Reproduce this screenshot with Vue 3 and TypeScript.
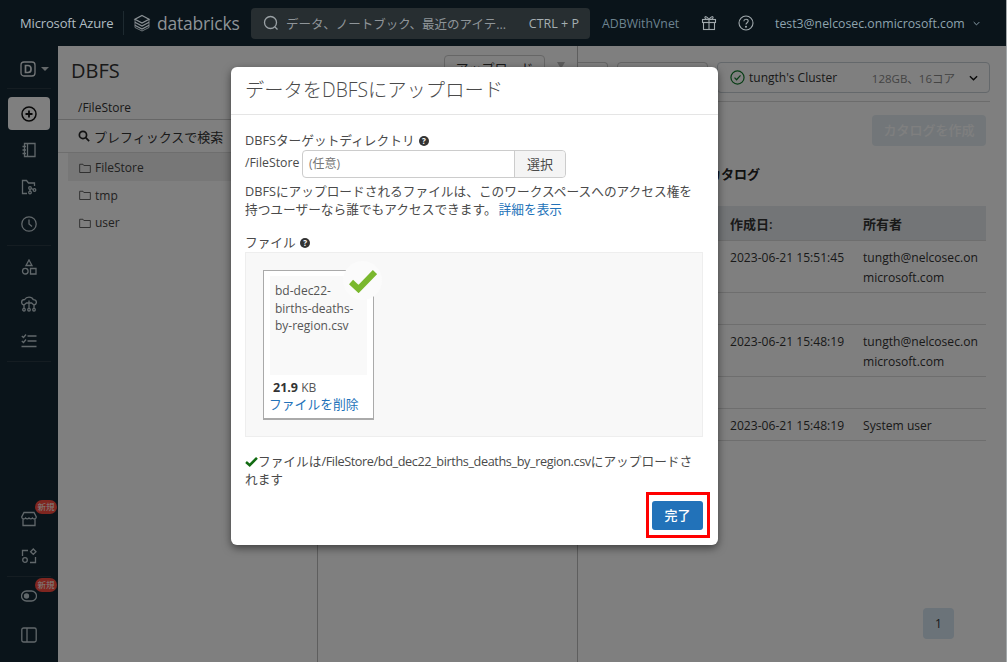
<script setup lang="ts">
interface Row { date: string; owner: string[]; spacer: boolean }
const rows: Row[] = [
  { date: '2023-06-21 15:51:45', owner: ['tungth@nelcosec.on', 'microsoft.com'], spacer: true },
  { date: '2023-06-21 15:48:19', owner: ['tungth@nelcosec.on', 'microsoft.com'], spacer: true },
  { date: '2023-06-21 15:48:19', owner: ['System user'], spacer: false },
]
const folders = ['FileStore', 'tmp', 'user']
</script>

<template>
  <div class="page">
    <header class="top">
      <span class="azure">Microsoft Azure</span>
      <span class="topsep"></span>
      <svg class="stack" viewBox="0 0 18 18" width="18" height="18" fill="none" stroke="currentColor" stroke-width="1.3">
        <path d="M9 1.500 16 5.300 9 9 2 5.300Z" />
        <path d="M2 8.200 9 12l7-3.800" />
        <path d="M2 11.200 9 15l7-3.800" />
        <path d="M2 5.500v8L9 17l7-3.500v-8" stroke-width="0.8" />
      </svg>
      <span class="brand">databricks</span>
      <div class="search">
        <svg viewBox="0 0 16 16" width="16" height="16" fill="none" stroke="currentColor" stroke-width="1.3">
          <circle cx="7.500" cy="7.500" r="6" /><path d="m12 12 2.500 2.500" />
        </svg>
        <span class="stext">データ、ノートブック、最近のアイテ...</span>
        <span class="skey">CTRL + P</span>
      </div>
      <span class="ws">ADBWithVnet</span>
      <svg class="gift" viewBox="0 0 16 16" width="16" height="16" fill="none" stroke="currentColor" stroke-width="1.1">
        <rect x="1.500" y="4.500" width="13" height="3" /><rect x="2.500" y="7.500" width="11" height="7" />
        <path d="M8 4.500v10M8 4.500C6 1 3.500 1 4 3c.2.9 2 1.500 4 1.500Zm0 0c2-3.500 4.500-3.500 4-1.500-.2.9-2 1.500-4 1.500Z" />
      </svg>
      <svg class="help" viewBox="0 0 16 16" width="16" height="16" fill="none" stroke="currentColor" stroke-width="1.1">
        <circle cx="8" cy="8" r="7" /><path d="M5.800 6.200C5.900 4.900 6.800 4.200 8 4.200c1.300 0 2.200.8 2.200 1.900 0 1.800-2.200 1.600-2.200 3.500" /><circle cx="8" cy="11.700" r=".5" />
      </svg>
      <span class="user">test3@nelcosec.onmicrosoft.com</span>
      <svg class="ch" viewBox="0 0 10 6" width="7" height="5" fill="none" stroke="currentColor" stroke-width="1.4"><path d="m1 1 4 4 4-4" /></svg>
    </header>

    <div class="body">
      <nav class="side">
        <div class="wsicon">
          <svg viewBox="0 0 16 16" width="16" height="16" fill="none" stroke="#e8eef1" stroke-width="1.3">
            <path d="M4 1h8a3 3 0 0 1 3 3v8a3 3 0 0 1-3 3H4a3 3 0 0 1-3-3V4a3 3 0 0 1 3-3Z" />
            <path d="M5.500 4.500v7H8a3 3 0 0 0 3-3v-1a3 3 0 0 0-3-3Z" stroke-width="1.700" />
          </svg>
          <span class="caret"></span>
        </div>
        <span class="nsep first"></span>
        <div class="nitem active">
          <svg viewBox="0 0 16 16" width="16" height="16" fill="none" stroke="#111" stroke-width="1.500"><circle cx="8" cy="8" r="7" /><path d="M8 4.500v7M4.500 8h7" stroke-width="1.800" /></svg>
        </div>
        <div class="nitem">
          <svg viewBox="0 0 16 16" width="16" height="16"><path d="M3.500 1.500h10.500v13H3.500Zm3 0v13M1.500 4.500h3.500M1.500 8h3.500M1.500 11.500h3.500" /></svg>
        </div>
        <div class="nitem">
          <svg viewBox="0 0 16 16" width="16" height="16"><path d="M6 14.500H1.500v-13h4l2 2.500h6v3" /><circle cx="9" cy="9" r="1.300" /><circle cx="9" cy="13.500" r="1.300" /><circle cx="13.500" cy="11" r="1.300" /><path d="M9 10.300v2M10.300 9.500l2 1" /></svg>
        </div>
        <div class="nitem">
          <svg viewBox="0 0 16 16" width="16" height="16"><circle cx="8" cy="8" r="7.200" /><path d="M8 3.500V8l3 2.500" /></svg>
        </div>
        <span class="nsep second"></span>
        <div class="nitem">
          <svg viewBox="0 0 16 16" width="16" height="16"><path d="M8 1 11 6.500H5ZM9.500 9.500h5.500v5.500H9.500Z" /><circle cx="4.300" cy="12.200" r="2.800" /></svg>
        </div>
        <div class="nitem">
          <svg viewBox="0 0 16 16" width="16" height="16"><path d="M3 9c-1.500-.3-2.400-1.500-2.400-2.800C.6 4.600 2 3.500 3.700 3.500 4.500 2 6.200 1.200 8 1.200c2.200 0 3.700 1.200 4.300 2.500 1.800.1 3.100 1.300 3.100 2.600 0 1.400-1 2.400-2.400 2.700M8 4.500v7.500M3 12.300V9M13 12.300V9M3 9l2.500-2h5L13 9" /><circle cx="3" cy="13.700" r="1.300" /><circle cx="8" cy="13.700" r="1.300" /><circle cx="13" cy="13.700" r="1.300" /></svg>
        </div>
        <div class="nitem">
          <svg viewBox="0 0 16 16" width="16" height="16"><path d="M6.500 3h9M6.500 8h9M.5 13.500h15M.8 3l1.700 1.500L5 1.500M.8 8l1.700 1.500L5 6.500" /></svg>
        </div>
        <span class="nsep third"></span>
        <div class="spacer"></div>
        <div class="nitem">
          <span class="badge">新規</span>
          <svg viewBox="0 0 16 16" width="16" height="16"><path d="M2 8v6.500h12V8M3 1.500h10L15.300 6c0 2-2.800 2.500-3.800 1-1 1-2.500 1-3.500 0-1 1-2.500 1-3.500 0-1 1.500-3.800 1-3.800-1Z" /></svg>
        </div>
        <div class="nitem">
          <svg viewBox="0 0 16 16" width="16" height="16"><path d="M7 2.500H1.500V8M9 14.500h5.500V9" /><path d="M12.300 1 15 3.700l-2.700 2.700-2.700-2.700Z" /><circle cx="4" cy="12" r="2.300" /></svg>
        </div>
        <span class="nsep fourth"></span>
        <div class="nitem">
          <span class="badge b2">新規</span>
          <svg viewBox="0 0 16 16" width="16" height="16"><rect x=".5" y="3" width="15" height="10" rx="5" /><circle cx="5.500" cy="8" r="2" fill="currentColor" /></svg>
        </div>
        <div class="nitem last">
          <svg viewBox="0 0 16 16" width="16" height="16"><rect x=".8" y="1" width="14.400" height="14" rx="1.800" /><path d="M6 1v14" /></svg>
        </div>
      </nav>

      <main class="content">
        <section class="dbfs">
          <div class="dhead">
            <h1>DBFS</h1>
            <span class="upbtn">アップロード</span>
            <span class="upx"></span>
          </div>
          <div class="crumb">/FileStore</div>
          <div class="cols">
            <div class="col1">
              <div class="prefix">
                <svg viewBox="0 0 14 14" width="12" height="12" fill="none" stroke="#222" stroke-width="2"><circle cx="5.800" cy="5.800" r="4.200" /><path d="m9 9 4 4" /></svg>
                <span>プレフィックスで検索</span>
              </div>
              <div v-for="(f, i) in folders" :key="f" class="folder" :class="{ sel: i === 0 }">
                <svg viewBox="0 0 14 12" width="12" height="10" fill="none" stroke="#555" stroke-width="1.100"><path d="M.6 1.500h4l1 1.500h7.800v8.400H.6Z" /></svg>
                <span>{{ f }}</span>
              </div>
            </div>
            <div class="col2"></div>
          </div>
        </section>

        <section class="catalog">
          <div class="ctop">
            <span class="chip c1"></span>
            <span class="chip c2"></span>
            <div class="cluster">
              <svg viewBox="0 0 16 16" width="15" height="15" fill="none" stroke="#0f7a2a" stroke-width="1.300"><circle cx="8" cy="8" r="7" /><path d="m4.800 8.200 2.200 2.200 4.200-4.600" /></svg>
              <span class="cname">tungth's Cluster</span>
              <span class="cinfo">128GB、16コア</span>
              <svg class="cch" viewBox="0 0 10 6" width="9" height="6" fill="none" stroke="#111" stroke-width="1.500"><path d="m1 1 4 4 4-4" /></svg>
            </div>
          </div>
          <div class="cbody">
            <div class="createrow"><span class="create">カタログを作成</span></div>
            <h2>カタログ</h2>
            <div class="table">
              <div class="thead"><span class="d">作成日:</span><span class="o">所有者</span></div>
              <template v-for="(r, i) in rows" :key="i">
                <div class="trow"><span class="d">{{ r.date }}</span><span class="o"><span v-for="l in r.owner" :key="l" class="ol">{{ l }}</span></span></div>
                <div v-if="r.spacer" class="tgap"></div>
              </template>
            </div>
            <div class="pager"><span class="pg">1</span></div>
          </div>
        </section>
      </main>

      <div class="overlay">
        <div class="modal">
          <div class="mhead">データをDBFSにアップロード</div>
          <div class="mbody">
            <div class="label">DBFSターゲットディレクトリ <span class="q">?</span></div>
            <div class="pathrow">
              <span class="prefixp">/FileStore</span>
              <div class="igroup"><span class="ph">(任意)</span><span class="sel-btn">選択</span></div>
            </div>
            <p class="note">DBFSにアップロードされるファイルは、このワークスペースへのアクセス権を持つユーザーなら誰でもアクセスできます。<a>詳細を表示</a></p>
            <div class="label l2">ファイル <span class="q">?</span></div>
            <div class="drop">
              <div class="file">
                <div class="fname">bd-dec22-births-deaths-by-region.csv</div>
                <div class="fsize"><b>21.9</b> KB</div>
                <a class="fdel">ファイルを削除</a>
                <span class="okmark">
                  <svg viewBox="0 0 28 24" width="28" height="24" fill="none" stroke="#7ab82e" stroke-width="6"><path d="m2 13 7.500 7L26 3" /></svg>
                </span>
              </div>
            </div>
            <p class="result">
              <svg viewBox="0 0 14 11" width="13" height="10" fill="none" stroke="#126b12" stroke-width="2.800"><path d="m1 5.500 4 3.500 8-8" /></svg>ファイルは<span class="rpath">/FileStore/bd_dec22_births_deaths_by_region.csv</span>にアップロードされます
            </p>
          </div>
          <div class="mfoot"><span class="highlight"><span class="done">完了</span></span></div>
        </div>
      </div>
    </div>
  </div>
</template>

<style>
html, body { margin: 0; padding: 0; background: #808080; }
</style>

<style scoped>
.page {
  width: 1007px; height: 662px; overflow: hidden; display: flex; flex-direction: column; box-sizing: border-box;
  border-right: 1px solid #a3a8aa;
  font-family: "Open Sans", "Noto Sans CJK JP", sans-serif; font-size: 13px; color: #333;
}
.top {
  height: 46px; flex: none; background: #0a141a; display: flex; align-items: center;
  color: #a7b0b5; box-sizing: border-box; padding-left: 20px; white-space: nowrap;
}
.azure { font-size: 13px; width: 103px; flex: none; letter-spacing: -.15px; color: #b0bcc2; }
.topsep { width: 1px; height: 24px; background: #1e2a30; margin-right: 9px; }
.stack { color: #8a9094; flex: none; }
.brand { font-size: 17.500px; font-weight: 500; color: #8e9397; margin-left: 6px; width: 84px; flex: none; letter-spacing: -.2px; }
.search {
  width: 339px; height: 31px; margin-left: 10px; flex: none; background: #272e31; border-radius: 4px;
  display: flex; align-items: center; box-sizing: border-box; padding: 0 11px 0 12px; color: #9aa1a5;
}
.stext { margin-left: 7px; font-size: 12.500px; flex: 1; color: #8f9599; overflow: hidden; }
.skey { font-size: 12.500px; color: #a5aeb2; }
.ws { margin-left: 12px; font-size: 12.300px; color: #6d8390; width: 76px; flex: none; }
.gift { margin-left: 23px; color: #a0a8ac; flex: none; }
.help { margin-left: 21px; color: #a0a8ac; flex: none; }
.user { margin-left: 21px; font-size: 12.300px; color: #8ea3ae; }
.ch { margin-left: 8px; color: #8ea3ae; flex: none; }

.body { flex: 1; display: flex; position: relative; min-height: 0; }
.side { width: 58px; flex: none; background: #142834; display: flex; flex-direction: column; align-items: center; position: relative; }
.nitem:not(.active) svg { fill: none; stroke: currentColor; stroke-width: 1.300; }
.wsicon { height: 42px; flex: none; width: 100%; display: flex; align-items: center; justify-content: center; gap: 5px; box-sizing: border-box; padding: 4px 0 0 11px; }
.caret { border: 4px solid transparent; border-top-color: #c9d0d4; border-bottom: 0; }
.nsep { height: 1px; width: 44px; background: #2a3a44; flex: none; }
.first { margin-bottom: 8px; }
.second { margin: 3px 0 2px; }
.third { margin-top: 2px; }
.fourth { margin: 2px 0 0; }
.nitem {
  width: 42px; height: 37px; flex: none; display: flex; align-items: center; justify-content: center;
  color: #c3d0d6; position: relative;
}
.active { height: 33px; margin-bottom: 1px; background: #fff; border-radius: 4px; }
.spacer { flex: 1; }
.last { margin-top: 2px; margin-bottom: 9px; }
.badge {
  position: absolute; left: 27px; top: 0; width: 22px; height: 14px; border-radius: 7px;
  background: #ff4c40; color: #fff; font-size: 8.500px; line-height: 14px; text-align: center;
}
.b2 { top: 1px; }

.content { flex: 1; display: flex; background: #fff; min-width: 0; }
.dbfs { width: 520px; flex: none; display: flex; flex-direction: column; border-right: 1px solid #bcbcbc; box-sizing: border-box; }
.dhead { height: 46px; flex: none; display: flex; align-items: flex-start; padding: 9px 0 0 13px; box-sizing: border-box; }
.dhead h1 { margin: 2px 0 0; font-size: 20px; line-height: 28px; font-weight: 400; color: #333; flex: none; width: 373px; }
.upbtn { border: 1px solid #ccc; border-radius: 4px; width: 101px; height: 26px; box-sizing: border-box; font-size: 13px; text-align: center; line-height: 24px; white-space: nowrap; overflow: hidden; flex: none; }
.upx { width: 0; height: 0; border: 4px solid transparent; border-top: 7px solid #bbb; border-bottom: 0; margin: 7px 0 0 12px; }
.crumb { height: 28px; flex: none; box-sizing: border-box; padding: 8px 0 0 20px; line-height: 16px; font-size: 12px; border-bottom: 1px solid #ccc; }
.cols { flex: 1; display: flex; }
.col1 { width: 260px; flex: none; padding-left: 10px; box-sizing: border-box; border-right: 1px solid #bcbcbc; }
.col2 { flex: 1; }
.prefix { height: 33px; display: flex; align-items: center; gap: 4px; font-size: 13px; color: #333; border-bottom: 1px solid #ddd; box-sizing: border-box; margin-left: -10px; padding-left: 20px; }
.folder { height: 27.500px; display: flex; align-items: center; gap: 4px; padding: 2px 0 0 11px; box-sizing: border-box; font-size: 12px; color: #444; }
.sel { background: #eee; }

.catalog { flex: 1; min-width: 0; display: flex; flex-direction: column; }
.ctop { height: 47px; flex: none; display: flex; align-items: flex-end; justify-content: flex-end; padding: 0 16px 0 0; box-sizing: border-box; gap: 9px; }
.chip { border: 1px solid #ccc; border-radius: 4px; height: 31px; box-sizing: border-box; flex: none; }
.c1 { width: 30px; margin-right: auto; border-left: 0; border-radius: 0 4px 4px 0; }
.c2 { width: 91px; }
.cluster {
  width: 273px; height: 31px; flex: none; border: 1px solid #c8d0d6; border-radius: 4px; box-sizing: border-box;
  display: flex; align-items: center; padding: 0 11px 0 12px; font-size: 12px; color: #333; white-space: nowrap;
}
.cluster svg { flex: none; }
.cname { margin-left: 4px; flex: 1; }
.cinfo { color: #888; margin-right: 14px; font-size: 11.500px; }
.cbody { flex: 1; margin: 8px 16px 0 0; padding: 0 4px 0 0; border-top: 1px solid #d8d8d8; display: flex; flex-direction: column; min-height: 0; }
.createrow { display: flex; justify-content: flex-end; padding-top: 13px; }
.create { width: 114px; height: 31px; border-radius: 4px; background: #e4edf3; color: #fff; text-align: center; line-height: 31px; font-size: 13px; font-weight: 500; }
.cbody h2 { margin: 19px 0 0; font-size: 13px; font-weight: 600; color: #222; line-height: 18px; padding-left: 130px; }
.table { margin-top: 23px; font-size: 12.100px; }
.thead { height: 35px; padding-left: 152px; background: #e6ebee; display: flex; align-items: center; font-weight: 600; font-size: 13px; border-bottom: 1px solid #ddd; color: #333; box-sizing: border-box; }
.trow { display: flex; padding: 7px 0 4px 152px; border-bottom: 1px solid #ddd; line-height: 20px; }
.tgap { height: 31px; border-bottom: 1px solid #ddd; }
.d { width: 133px; flex: none; white-space: nowrap; }
.o { flex: 1; white-space: nowrap; }
.ol { display: block; }
.pager { flex: 1; display: flex; align-items: flex-end; justify-content: flex-end; padding: 0 32px 23px 0; }
.pg { width: 31px; height: 31px; border-radius: 4px; background: #d6e6f2; color: #333; text-align: center; line-height: 31px; font-size: 12px; }

.overlay { position: absolute; inset: 0; background: rgba(0, 0, 0, .5); padding: 21px 0 0 231px; box-sizing: border-box; }
.modal {
  width: 487px; height: 478px; background: #fff; border-radius: 6px; box-shadow: 0 3px 9px rgba(0,0,0,.5);
  display: flex; flex-direction: column; color: #4a4a4a;
}
.mhead { height: 48px; flex: none; box-sizing: border-box; border-bottom: 1px solid #e5e5e5; padding: 8px 14px; font-size: 19.300px; font-weight: 300; line-height: 30px; color: #4a4a4a; white-space: nowrap; }
.mbody { flex: 1; padding: 16px 15px 0 14px; font-size: 12.700px; }
.label { line-height: 18px; }
.l2 { margin-top: 15px; }
.q { display: inline-block; width: 10px; height: 10px; background: #333; color: #fff; border-radius: 50%; font-size: 8px; line-height: 10px; text-align: center; font-weight: 700; margin-left: 1px; vertical-align: 1px; }
.pathrow { display: flex; align-items: flex-start; margin-top: 1px; }
.prefixp { width: 57px; font-size: 12.300px; line-height: 25px; flex: none; }
.igroup { width: 264px; height: 28px; border: 1px solid #ccc; border-radius: 4px; display: flex; box-sizing: border-box; }
.ph { flex: 1; padding-left: 6px; line-height: 26px; font-size: 12px; color: #777; }
.sel-btn { width: 50px; background: #f4f4f4; border-left: 1px solid #ccc; text-align: center; line-height: 26px; border-radius: 0 4px 4px 0; font-size: 13px; }
.note { margin: 4px 0 0; line-height: 18px; }
.note a { color: #2272b9; margin-left: 2px; }
.drop { margin-top: 1px; height: 185px; background: #f8f8f8; border: 1px solid #eee; box-sizing: border-box; padding: 17px; }
.file { width: 111px; height: 150px; background: #fff; border: 1px solid #aaa; border-bottom-width: 2px; box-sizing: border-box; padding: 5px 6px; position: relative; }
.fname { height: 99px; background: #f9f9f9; box-sizing: border-box; padding: 6px 5px; font-size: 12px; line-height: 17.500px; color: #555; overflow-wrap: break-word; }
.fsize { font-size: 12px; margin-top: 5px; line-height: 15px; padding-left: 3px; color: #555; }
.fsize b { color: #333; font-size: 12.500px; }
.fdel { display: block; color: #2272b9; font-size: 12.800px; line-height: 18px; margin-left: -1px; white-space: nowrap; }
.okmark { position: absolute; right: -9px; top: -10px; width: 39px; height: 39px; border-radius: 50%; background: #fbfbfb; display: flex; align-items: center; justify-content: center; }
.result { margin: 16px 0 0; line-height: 17.500px; }
.result svg { margin-right: 0; vertical-align: -1px; }
.rpath { letter-spacing: -.4px; }
.mfoot { height: 57px; flex: none; display: flex; justify-content: flex-end; padding: 4px 8px 0 0; box-sizing: border-box; }
.highlight { border: 3px solid #f00; height: 46px; width: 64px; box-sizing: border-box; display: flex; align-items: center; justify-content: center; padding-right: 1px; }
.done { width: 51px; height: 29px; border-radius: 3px; background: #2272b9; color: #fff; font-size: 13px; font-weight: 500; line-height: 29px; text-align: center; }
</style>
